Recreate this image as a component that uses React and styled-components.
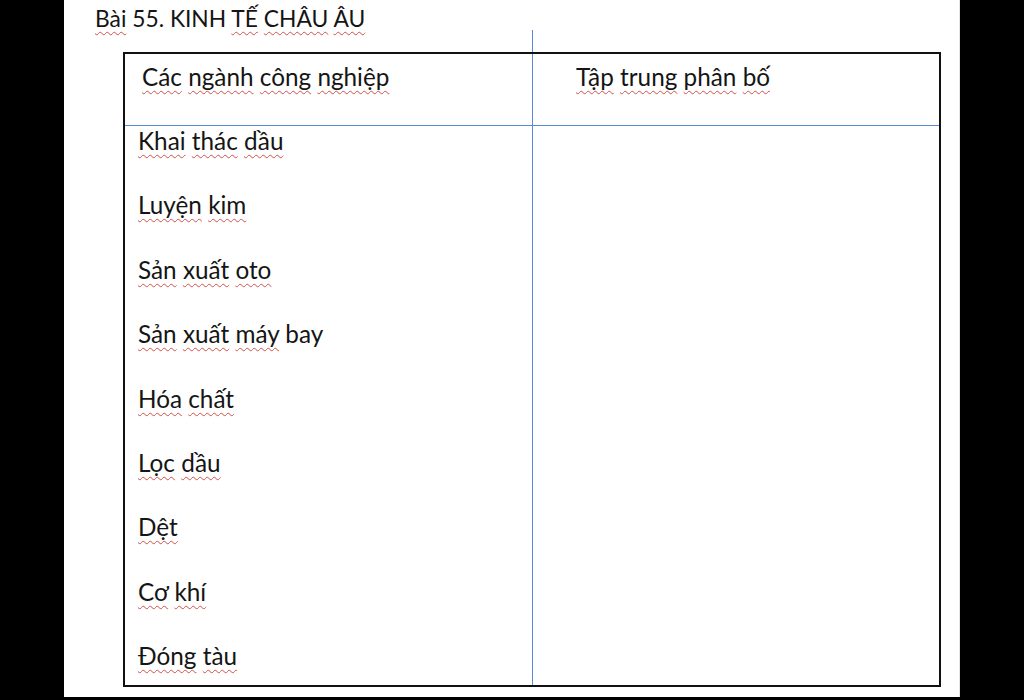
import React from "react";
import styled, { createGlobalStyle } from "styled-components";

const GlobalStyle = createGlobalStyle`
  html, body {
    margin: 0;
    background: #000;
  }
  body {
    font-family: Lato, "Open Sans", sans-serif;
    color: #151515;
  }
`;

const Page = styled.div`
  width: 896px;
  height: 697px;
  margin-left: 64px;
  background: #fff;
  border-right: 1px solid #e4e4e4;
  box-sizing: border-box;
  overflow: hidden;
`;

const Title = styled.div`
  height: 30px;
  padding: 3px 0 0 31px;
  box-sizing: border-box;
  font-size: 22.8px;
  line-height: 30px;
`;

const Stub = styled.div`
  height: 22px;
  margin-left: 468px;
  border-left: 1px solid #5b8bd0;
`;

const Table = styled.div`
  width: 818px;
  height: 635px;
  margin-left: 59px;
  border: 2px solid #111;
  box-sizing: border-box;
  display: grid;
  grid-template-columns: 407px 1fr;
  grid-template-rows: 72px 1fr;
`;

const Cell = styled.div`
  box-sizing: border-box;
  font-size: 24.3px;
  line-height: 30px;
  border-left: ${(p) => (p.$divided ? "1px solid #5b8bd0" : "none")};
  border-bottom: ${(p) => (p.$head ? "1px solid #5b8bd0" : "none")};
  padding: ${(p) => p.$pad};
`;

const List = styled.div`
  display: flex;
  flex-direction: column;
  gap: 34.4px;
`;

const Word = styled.span`
  text-decoration: ${(p) => (p.$plain ? "none" : "underline wavy #d0504a")};
  text-decoration-thickness: 1px;
  text-underline-offset: 4px;
  text-decoration-skip-ink: none;
`;

function Line({ text, plain = [] }) {
  const words = text.split(" ");
  return (
    <div>
      {words.map((w, i) => (
        <React.Fragment key={i}>
          <Word $plain={plain.includes(w)}>{w}</Word>
          {i < words.length - 1 ? " " : ""}
        </React.Fragment>
      ))}
    </div>
  );
}

const industries = [
  { text: "Khai thác dầu" },
  { text: "Luyện kim" },
  { text: "Sản xuất oto" },
  { text: "Sản xuất máy bay", plain: ["bay"] },
  { text: "Hóa chất" },
  { text: "Lọc dầu" },
  { text: "Dệt" },
  { text: "Cơ khí" },
  { text: "Đóng tàu" },
];

export default function App() {
  return (
    <>
      <GlobalStyle />
      <Page>
        <Title>
          <Line text="Bài 55. KINH TẾ CHÂU ÂU" plain={["55.", "KINH"]} />
        </Title>
        <Stub />
        <Table>
          <Cell $head $pad="8px 0 0 17px">
            <Line text="Các ngành công nghiệp" />
          </Cell>
          <Cell $head $divided $pad="8px 0 0 43px">
            <Line text="Tập trung phân bố" />
          </Cell>
          <Cell $pad="0 0 0 13px">
            <List>
              {industries.map((it) => (
                <Line key={it.text} text={it.text} plain={it.plain} />
              ))}
            </List>
          </Cell>
          <Cell $divided />
        </Table>
      </Page>
    </>
  );
}
